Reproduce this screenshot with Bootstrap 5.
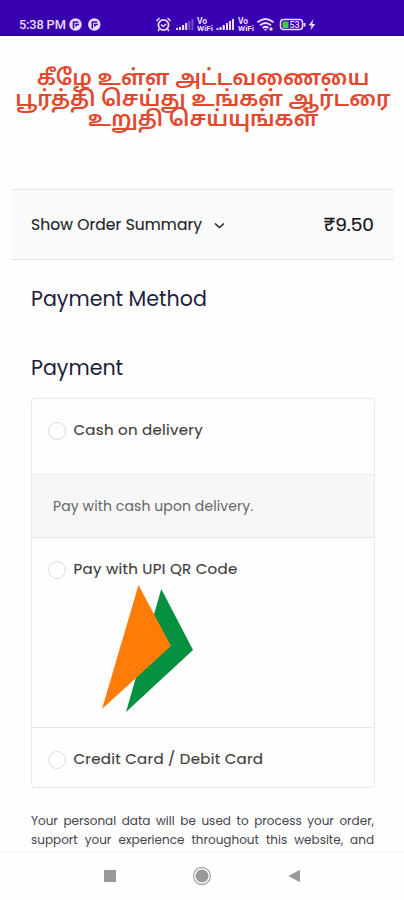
<!DOCTYPE html>
<html lang="en">
<head>
<meta charset="utf-8">
<meta name="viewport" content="width=device-width, initial-scale=1">
<title>Payment</title>
<link href="https://cdn.jsdelivr.net/npm/bootstrap@5.3.0/dist/css/bootstrap.min.css" rel="stylesheet">
<style>
body{font-family:Poppins,Inter,"Noto Sans",sans-serif;color:#222;background:#fff;height:900px;overflow:hidden}
.screen{width:404px;height:900px;background:#fefefe}
.status{height:36px;background:#3900b1;padding:14px 0 0 19px;color:#eadcff;border-bottom:1px solid #2b0a8c}
.clock{font:500 12.8px/22px Roboto,sans-serif;width:50px;white-space:nowrap;letter-spacing:-.15px}
.status svg{display:block}
.tamil{height:153px;padding:34px 0 0 2px;color:#e2492f;font:600 21.7px/20.5px "Noto Sans Tamil","Noto Sans",sans-serif}
.tamil div{white-space:nowrap}
.summary{height:71px;margin:0 10px 0 11px;padding:0 20px;background:#f9fafc;border-top:1px solid #e4e6e8;border-bottom:1px solid #e1e4e6}
.sum-label{font-size:15.5px;letter-spacing:.08px;-webkit-text-stroke:.15px #222}
.total{font-size:18.5px;color:#161616;-webkit-text-stroke:.2px #161616}
.head{font-size:20.6px;line-height:30px;font-weight:400;color:#211d3d;margin:24px 0 0 31px}
.head + .head{margin-top:39px}
.box{margin:15px 29px 0 31px;height:390px;border:1px solid #e8e8e8;border-radius:4px;overflow:hidden}
.opt{padding:19px 0 0 16px;font-size:15px;letter-spacing:.28px;color:#3c3c3c;line-height:24px;-webkit-text-stroke:.15px #3c3c3c}
.opt-cash{height:75px}
.opt-upi{height:189px}
.opt-card{border-top:1px solid #e6e6e6}
.ring{width:18px;height:18px;border:1px solid #dcdcdc;border-radius:50%;margin:4px 7.5px 0 0}
.note{height:64px;background:#f7f7f7;border-top:1px solid #efefef;border-bottom:1px solid #e6e6e6;padding:0 21px 0;font-size:14px;letter-spacing:.1px;color:#666}
.privacy{margin:23px 30px 0 31px;font-size:12px;line-height:19px;color:#45434c}
.privacy div{text-align:justify;text-align-last:justify;white-space:nowrap}
.navkeys{height:49px;padding:0 103px;margin-top:2px;border-top:1px solid #f6f6f6}
</style>
</head>
<body>
<div class="screen d-flex flex-column">
  <header class="status d-flex flex-shrink-0">
    <div class="clock">5:38 PM</div>
    <svg width="335" height="22" viewBox="69 14 335 22" fill="none" stroke="#eadcff">
      <g fill="#eadcff" stroke="none"><circle cx="75.500" cy="24.500" r="6.200"/><circle cx="94.300" cy="24.500" r="6.200"/></g>
      <path d="M73.500 28.500v-6.500h5M76 26.500v-2h3M92.300 28.500v-6.500h5M94.800 26.500v-2h3" stroke="#3900b1" stroke-width="1.600"/>
      <circle cx="163.500" cy="25" r="5.100" stroke-width="1.800"/><path d="M156.500 21l3-3M170.500 21l-3-3M161 24.500l2.200 2 3-2.500M159.500 29l-1.500 2M167.500 29l1.500 2" stroke-width="1.500"/>
      <g stroke="none" fill="#eadcff">
        <path d="M176 28h2v2h-2zM179 27h2v3h-2zM182 25h2.200v5H182zM185.200 23h2v7h-2z"/><path opacity=".35" d="M188.300 21h2v9h-2zM191.400 19h2v11h-2z"/>
        <path d="M216.500 28h2v2h-2zM219.500 27h2v3h-2zM222.600 25h2.200v5h-2.200zM226 23h2v7h-2zM229 21h2v9h-2zM232 19h2v11h-2z"/>
        <g font-family="Roboto,sans-serif" font-weight="700"><text x="197" y="23.500" font-size="8.500">Vo</text><text x="197" y="31" font-size="8" textLength="16" lengthAdjust="spacingAndGlyphs">WiFi</text><text x="238" y="23.500" font-size="8.500">Vo</text><text x="238" y="31" font-size="8" textLength="16" lengthAdjust="spacingAndGlyphs">WiFi</text></g>
      </g>
      <path d="M257.500 22.300q8-6.500 16 0M260 25.300q5.500-4.500 11 0M262.700 28q2.800-2.300 5.600 0" stroke-width="2"/><path d="M264 29h3l-1.500 2zM269 29l2-2 2 2-2 2z" fill="#eadcff" stroke="none"/>
      <rect x="280.500" y="19.500" width="22" height="10" rx="3" stroke-width="1.500"/><path d="M282.500 21.500h6v6.500h-6z" fill="#42cf38" stroke="none"/><path d="M304.500 23v3.500" stroke-width="2"/>
      <text x="289.500" y="28" font-family="Roboto,sans-serif" font-weight="500" font-size="9" fill="#eadcff" stroke="none">53</text>
      <path d="M313.500 19l-5 6.500h3l-1.200 5 5-6.500h-3z" fill="#eadcff" stroke="none"/>
    </svg>
  </header>
  <section class="tamil text-center flex-shrink-0" lang="ta">
    <div>கீழே உள்ள அட்டவணையை</div>
    <div>பூர்த்தி செய்து உங்கள் ஆர்டரை</div>
    <div>உறுதி செய்யுங்கள்</div>
  </section>
  <section class="summary d-flex align-items-center justify-content-between flex-shrink-0">
    <div class="d-flex align-items-center"><span class="sum-label">Show Order Summary</span>
      <svg class="ms-2" width="20" height="12" fill="none" stroke="#222" stroke-width="1.500"><path d="M5 4.500l4.500 4 4.500-4"/></svg></div>
    <span class="total">₹9.50</span>
  </section>
  <h2 class="head">Payment Method</h2>
  <h3 class="head">Payment</h3>
  <section class="box flex-shrink-0">
    <div class="opt opt-cash d-flex"><span class="ring"></span><span>Cash on delivery</span></div>
    <div class="note d-flex align-items-center"><span>Pay with cash upon delivery.</span></div>
    <div class="opt opt-upi">
      <div class="d-flex"><span class="ring"></span><span>Pay with UPI QR Code</span></div>
      <svg class="d-block" width="160" height="135" viewBox="48 581 160 135"><path fill="#069140" d="M161.300 589L193 650 126 712z"/><path fill="#ff7c08" d="M138.500 585L171 646 102 709z"/></svg>
    </div>
    <div class="opt opt-card d-flex"><span class="ring"></span><span>Credit Card / Debit Card</span></div>
  </section>
  <section class="privacy flex-shrink-0"><div>Your personal data will be used to process your order,</div><div>support your experience throughout this website, and</div></section>
  <footer class="navkeys d-flex align-items-center justify-content-between flex-shrink-0">
    <svg width="14" height="14"><path fill="#999" d="M1 1h12v12H1z"/></svg>
    <svg width="20" height="20"><circle cx="10" cy="10" r="8.500" fill="none" stroke="#aaa" stroke-width="1.300"/><circle cx="10" cy="10" r="6.500" fill="#999"/></svg>
    <svg width="14" height="14"><path fill="#999" d="M1.500 7L13 .7v12.600z"/></svg>
  </footer>
</div>
<script src="https://cdn.jsdelivr.net/npm/bootstrap@5.3.0/dist/js/bootstrap.bundle.min.js"></script>
</body>
</html>
